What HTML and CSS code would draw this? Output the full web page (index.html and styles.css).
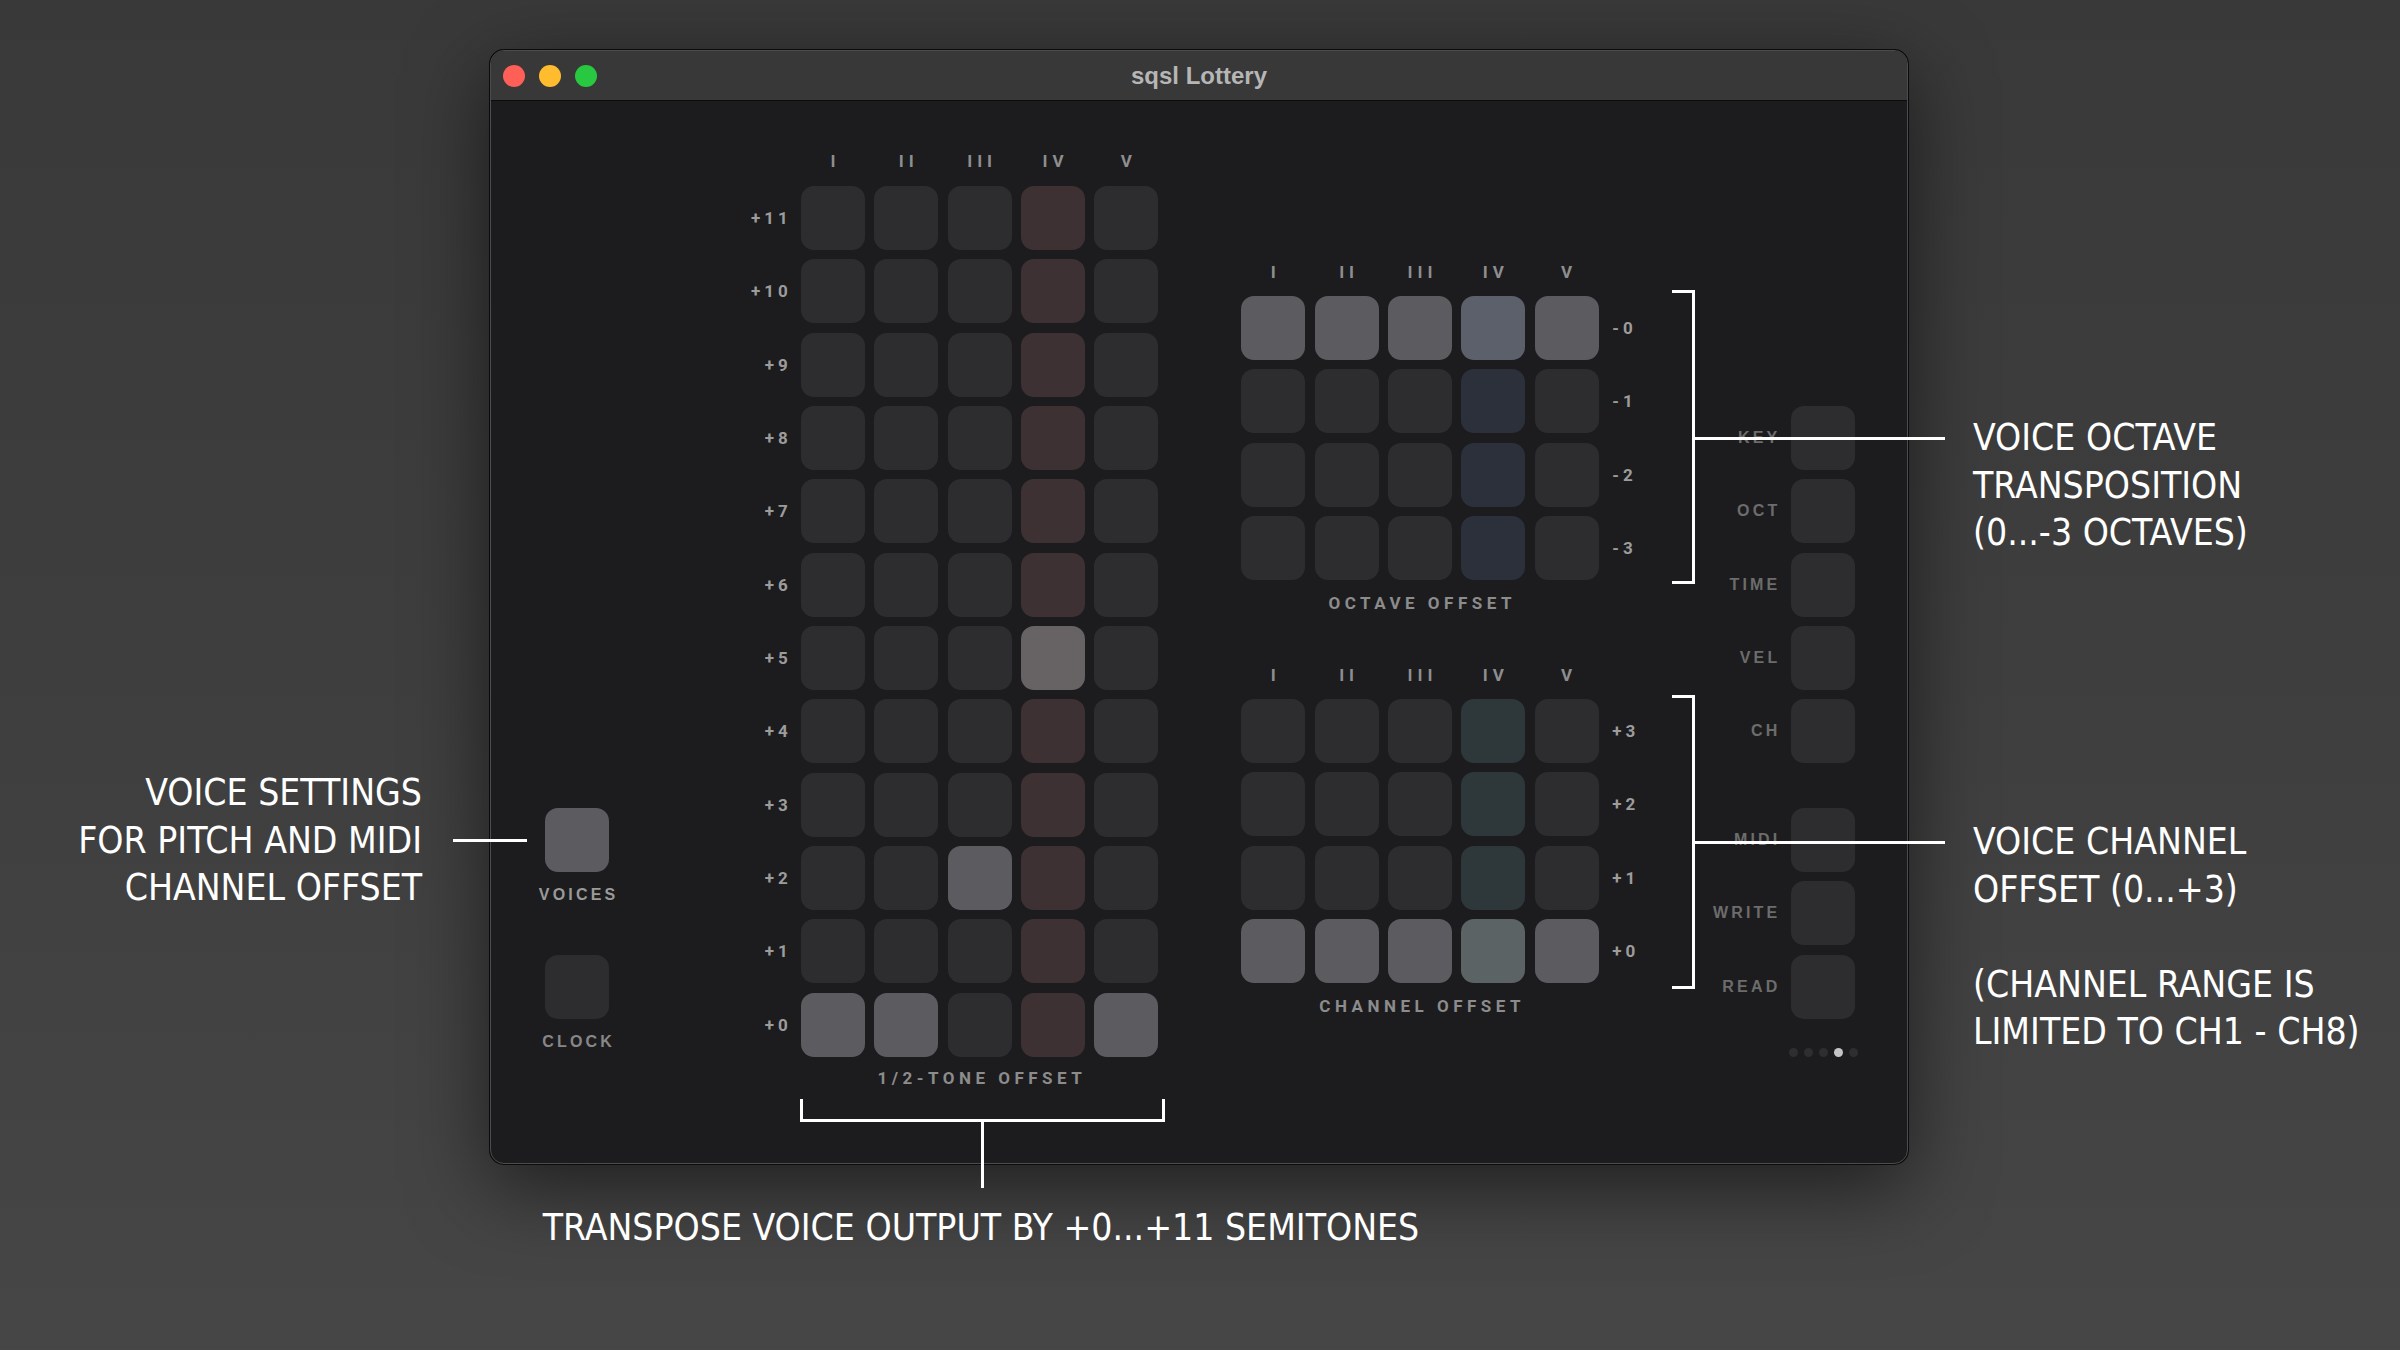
FILE: index.html
```html
<!DOCTYPE html>
<html lang="en">
<head>
<meta charset="utf-8">
<title>sqsl Lottery</title>
<link rel="stylesheet" href="styles.css">
</head>
<body>
<div class="stage">
  <div class="window">
    <div class="titlebar">
      <div class="lights"><span class="light red"></span><span class="light yellow"></span><span class="light green"></span></div>
      <div class="title">sqsl Lottery</div>
      <div></div>
    </div>
    <div class="content">
      <div class="col-left">
        <div class="toggle"><div class="pad on"></div><div class="cap">VOICES</div></div>
        <div class="toggle"><div class="pad"></div><div class="cap dim">CLOCK</div></div>
      </div>

      <div class="matrix semitone">
        <div></div><div class="hd">I</div><div class="hd">II</div><div class="hd">III</div><div class="hd">IV</div><div class="hd">V</div>
        <div class="rl">+11</div><div class="pad"></div><div class="pad"></div><div class="pad"></div><div class="pad r"></div><div class="pad"></div>
        <div class="rl">+10</div><div class="pad"></div><div class="pad"></div><div class="pad"></div><div class="pad r"></div><div class="pad"></div>
        <div class="rl">+9</div><div class="pad"></div><div class="pad"></div><div class="pad"></div><div class="pad r"></div><div class="pad"></div>
        <div class="rl">+8</div><div class="pad"></div><div class="pad"></div><div class="pad"></div><div class="pad r"></div><div class="pad"></div>
        <div class="rl">+7</div><div class="pad"></div><div class="pad"></div><div class="pad"></div><div class="pad r"></div><div class="pad"></div>
        <div class="rl">+6</div><div class="pad"></div><div class="pad"></div><div class="pad"></div><div class="pad r"></div><div class="pad"></div>
        <div class="rl">+5</div><div class="pad"></div><div class="pad"></div><div class="pad"></div><div class="pad rs"></div><div class="pad"></div>
        <div class="rl">+4</div><div class="pad"></div><div class="pad"></div><div class="pad"></div><div class="pad r"></div><div class="pad"></div>
        <div class="rl">+3</div><div class="pad"></div><div class="pad"></div><div class="pad"></div><div class="pad r"></div><div class="pad"></div>
        <div class="rl">+2</div><div class="pad"></div><div class="pad"></div><div class="pad on"></div><div class="pad r"></div><div class="pad"></div>
        <div class="rl">+1</div><div class="pad"></div><div class="pad"></div><div class="pad"></div><div class="pad r"></div><div class="pad"></div>
        <div class="rl">+0</div><div class="pad on"></div><div class="pad on"></div><div class="pad"></div><div class="pad r"></div><div class="pad on"></div>
        <div class="ft ft-semi">1/2-TONE OFFSET</div>
      </div>

      <div class="col-mid">
        <div class="matrix side">
          <div class="hd">I</div><div class="hd">II</div><div class="hd">III</div><div class="hd">IV</div><div class="hd">V</div><div></div>
          <div class="pad on"></div><div class="pad on"></div><div class="pad on"></div><div class="pad bo"></div><div class="pad on"></div><div class="sl">-0</div>
          <div class="pad"></div><div class="pad"></div><div class="pad"></div><div class="pad b"></div><div class="pad"></div><div class="sl">-1</div>
          <div class="pad"></div><div class="pad"></div><div class="pad"></div><div class="pad b"></div><div class="pad"></div><div class="sl">-2</div>
          <div class="pad"></div><div class="pad"></div><div class="pad"></div><div class="pad b"></div><div class="pad"></div><div class="sl">-3</div>
          <div class="ft ft-side">OCTAVE OFFSET</div>
        </div>
        <div class="matrix side">
          <div class="hd">I</div><div class="hd">II</div><div class="hd">III</div><div class="hd">IV</div><div class="hd">V</div><div></div>
          <div class="pad"></div><div class="pad"></div><div class="pad"></div><div class="pad t"></div><div class="pad"></div><div class="sl">+3</div>
          <div class="pad"></div><div class="pad"></div><div class="pad"></div><div class="pad t"></div><div class="pad"></div><div class="sl">+2</div>
          <div class="pad"></div><div class="pad"></div><div class="pad"></div><div class="pad t"></div><div class="pad"></div><div class="sl">+1</div>
          <div class="pad on"></div><div class="pad on"></div><div class="pad on"></div><div class="pad to"></div><div class="pad on"></div><div class="sl">+0</div>
          <div class="ft ft-side">CHANNEL OFFSET</div>
        </div>
      </div>

      <div class="col-right">
        <div class="ctl"><span class="ctl-label">KEY</span><div class="pad"></div></div>
        <div class="ctl"><span class="ctl-label">OCT</span><div class="pad"></div></div>
        <div class="ctl"><span class="ctl-label">TIME</span><div class="pad"></div></div>
        <div class="ctl"><span class="ctl-label">VEL</span><div class="pad"></div></div>
        <div class="ctl"><span class="ctl-label">CH</span><div class="pad"></div></div>
        <div class="ctl spaced"><span class="ctl-label">MIDI</span><div class="pad"></div></div>
        <div class="ctl"><span class="ctl-label">WRITE</span><div class="pad"></div></div>
        <div class="ctl"><span class="ctl-label">READ</span><div class="pad"></div></div>
        <div class="dots"><span class="dot"></span><span class="dot"></span><span class="dot"></span><span class="dot active"></span><span class="dot"></span></div>
      </div>
    </div>
  </div>

  <div class="note note-left">VOICE SETTINGS<br>FOR PITCH AND MIDI<br>CHANNEL OFFSET</div>
  <div class="rule rule-voices"></div>

  <div class="bracket br-oct"></div>
  <div class="rule rule-oct"></div>
  <div class="note note-oct">VOICE OCTAVE<br>TRANSPOSITION<br>(0...-3 OCTAVES)</div>

  <div class="bracket br-ch"></div>
  <div class="rule rule-ch"></div>
  <div class="note note-ch">VOICE CHANNEL<br>OFFSET (0...+3)<br><br>(CHANNEL RANGE IS<br>LIMITED TO CH1 - CH8)</div>

  <div class="bracket-down"></div>
  <div class="rule rule-stem"></div>
  <div class="note note-bottom">TRANSPOSE VOICE OUTPUT BY +0...+11 SEMITONES</div>
</div>
</body>
</html>
```
FILE: styles.css
```css
* { box-sizing: border-box; margin: 0; padding: 0; }
html, body { width: 2400px; height: 1350px; overflow: hidden; }
body {
  background: linear-gradient(180deg, #393939 0%, #3e3e3e 50%, #464646 100%);
  font-family: "Liberation Sans", Arial, sans-serif;
}
.stage { position: relative; width: 2400px; height: 1350px; padding: 50px 0 0 490px; }

.window {
  width: 1418px; height: 1114px;
  background: #1c1c1e;
  border: 1px solid #4c4c4e;
  border-radius: 14px;
  box-shadow: 0 0 0 1px #0b0b0b, 0 22px 80px rgba(0,0,0,.55);
  overflow: hidden;
}
.titlebar {
  height: 50px;
  background: #383838;
  border-bottom: 1px solid #0c0c0c;
  display: grid;
  grid-template-columns: 1fr auto 1fr;
  align-items: center;
}
.lights { display: flex; gap: 14px; padding-left: 12px; }
.light { width: 22px; height: 22px; border-radius: 50%; }
.red { background: #fe5f57; }
.yellow { background: #febc2e; }
.green { background: #28c840; }
.title { font-weight: 700; font-size: 24px; color: #b6b6b6; }

.content { display: flex; align-items: flex-start; height: 1063px; }

.pad { width: 64px; height: 64px; border-radius: 13px; background: #2d2d2f; }
.pad.on { background: #5c5c60; }
.pad.r { background: #3d3134; }
.pad.rs { background: #676264; }
.pad.b { background: #2b303b; }
.pad.bo { background: #5b606b; }
.pad.t { background: #2e373a; }
.pad.to { background: #5c6365; }

/* left column */
.col-left { margin-left: 54px; margin-top: 707px; width: 64px; display: flex; flex-direction: column; align-items: center; }
.toggle { display: flex; flex-direction: column; align-items: center; }
.toggle + .toggle { margin-top: 50px; }
.cap {
  margin-top: 13px; line-height: 20px; white-space: nowrap;
  font-weight: 700; font-size: 16px; letter-spacing: 3.2px; padding-left: 3.2px;
  color: #9a9a9a;
}
.cap.dim { color: #878787; }

/* matrices */
.matrix { display: grid; column-gap: 9.33px; row-gap: 9.33px; }
.semitone {
  margin-left: 129px; margin-top: 50px;
  grid-template-columns: 53.67px repeat(5, 64px);
  grid-template-rows: 25.67px repeat(12, 64px) auto;
}
.hd {
  font-family: Roboto, "Liberation Sans", sans-serif; font-weight: 700;
  font-size: 17px; line-height: 20px; letter-spacing: 5px; padding-left: 5px;
  text-align: center; color: #8e8e8e; align-self: start;
}
.rl, .sl {
  font-family: Roboto, "Liberation Sans", sans-serif; font-weight: 700;
  font-size: 17px; letter-spacing: 4px; color: #9c9c9c;
  display: flex; align-items: center;
}
.rl { justify-content: flex-end; }
.sl { padding-left: 4.33px; }
.ft {
  font-family: Roboto, "Liberation Sans", sans-serif; font-weight: 700;
  font-size: 17px; line-height: 20px; letter-spacing: 4.5px; padding-left: 4.5px;
  color: #8c8c8c; text-align: center; white-space: nowrap;
}
.ft-semi { grid-column: 2 / span 5; padding-top: 2.3px; }
.ft-side { grid-column: 1 / span 5; padding-top: 3.7px; }

.col-mid { margin-left: 83px; margin-top: 161px; display: flex; flex-direction: column; gap: 52px; }
.side {
  grid-template-columns: repeat(5, 64px) 34px;
  grid-template-rows: 24.67px repeat(4, 64px) auto;
}

/* right column */
.col-right { margin-left: 35.33px; margin-top: 305px; width: 178px; display: flex; flex-direction: column; gap: 9.33px; }
.ctl { display: flex; align-items: center; justify-content: flex-end; gap: 14px; }
.ctl.spaced { margin-top: 35.33px; }
.ctl-label { font-weight: 700; font-size: 16px; letter-spacing: 3.2px; margin-right: -3.2px; color: #6c6c6c; }
.dots { align-self: flex-end; width: 64px; display: flex; justify-content: center; gap: 6px; margin-top: 19.67px; }
.dot { width: 9px; height: 9px; border-radius: 50%; background: #2e2e30; flex: none; }
.dot.active { background: #c4c4c4; }

/* annotations (overlay) */
.note {
  position: absolute; color: #ffffff; white-space: nowrap;
  font-family: "Liberation Sans Narrow", "DejaVu Sans Condensed", "Liberation Sans", sans-serif;
  font-size: 37px; line-height: 47.5px; letter-spacing: 0;
}
.note-left { right: 1978px; top: 769px; text-align: right; }
.note-oct { left: 1973px; top: 414px; }
.note-ch { left: 1973px; top: 818px; }
.note-bottom { left: 481px; width: 1000px; top: 1204px; text-align: center; }

.rule { position: absolute; background: #ffffff; }
.rule-voices { left: 453px; top: 839px; width: 74px; height: 3px; }
.rule-oct { left: 1692px; top: 437px; width: 253px; height: 3px; }
.rule-ch { left: 1692px; top: 841px; width: 253px; height: 3px; }
.rule-stem { left: 981px; top: 1121px; width: 3px; height: 67px; }

.bracket { position: absolute; left: 1672px; width: 23px; height: 294px; border: 3px solid #ffffff; border-left: none; }
.br-oct { top: 290px; }
.br-ch { top: 695px; }
.bracket-down { position: absolute; left: 800px; top: 1099px; width: 365px; height: 23px; border: 3px solid #ffffff; border-top: none; }
```
